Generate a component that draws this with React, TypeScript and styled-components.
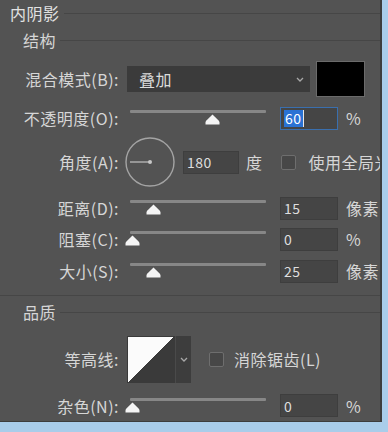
import styled, { createGlobalStyle } from "styled-components";

const GlobalStyle = createGlobalStyle`
  html, body {
    margin: 0;
    padding: 0;
    background: #a9cdea;
  }
  body {
    font-family: "Noto Sans CJK SC", "Noto Sans", sans-serif;
  }
`;

const Screen = styled.div`
  width: 388px;
  height: 432px;
  background: #a9cdea;
  overflow: hidden;
`;

const Panel = styled.div`
  width: 382px;
  height: 422px;
  box-sizing: border-box;
  background: #535353;
  border-right: 2px solid #3d3d3d;
  border-bottom: 1px solid #3d3d3d;
  overflow: hidden;
  color: #d6d6d6;
  font-size: 16px;
  letter-spacing: 0.5px;
  display: flex;
  flex-direction: column;
`;

const Legend = styled.div<{ $indent: number; $height: number; $bright?: boolean }>`
  display: flex;
  align-items: center;
  flex-shrink: 0;
  height: ${(p) => p.$height}px;
  padding-left: ${(p) => p.$indent}px;
  color: ${(p) => (p.$bright ? "#e2e2e2" : "#d6d6d6")};
  white-space: nowrap;

  &::after {
    content: "";
    flex: 1;
    margin-left: 4px;
    border-top: 1px solid #464646;
  }
`;

const Divider = styled.div`
  flex-shrink: 0;
  margin-top: 7px;
  border-top: 1px solid #464646;
`;

const Row = styled.div<{ $height: number }>`
  display: flex;
  align-items: center;
  flex-shrink: 0;
  height: ${(p) => p.$height}px;
  white-space: nowrap;
`;

const Label = styled.span`
  width: 119px;
  flex-shrink: 0;
  text-align: right;
`;

const Dropdown = styled.div`
  width: 183px;
  height: 26px;
  margin-left: 8px;
  box-sizing: border-box;
  padding: 0 6px 0 12px;
  background: #3b3b3b;
  display: flex;
  align-items: center;
  justify-content: space-between;
  color: #dcdcdc;
`;

const Swatch = styled.div`
  width: 49px;
  height: 36px;
  margin-left: 6px;
  box-sizing: border-box;
  background: #000;
  border: 1px solid #6b6b6b;
`;

const Slider = styled.div`
  position: relative;
  width: 136px;
  height: 22px;
  margin-left: 11px;
  padding-top: 3px;
  box-sizing: border-box;
  flex-shrink: 0;
`;

const Track = styled.div`
  height: 3px;
  border-radius: 1px;
  background: #878787;
`;

const Thumb = styled.svg`
  position: absolute;
  top: 7px;
  width: 15px;
  height: 11px;
  margin-left: -7.5px;
`;

const NumberBox = styled.div<{ $width?: number; $focused?: boolean; $gap?: number }>`
  width: ${(p) => p.$width ?? 58}px;
  height: 23px;
  margin-left: ${(p) => p.$gap ?? 14}px;
  box-sizing: border-box;
  padding-left: 3px;
  background: #454545;
  border: 1px solid ${(p) => (p.$focused ? "#3a6fae" : "#3e3e3e")};
  display: flex;
  align-items: center;
  font-size: 14px;
  color: #dedede;
  flex-shrink: 0;
`;

const Selected = styled.span`
  display: inline-block;
  height: 17px;
  line-height: 17px;
  padding: 0 1px;
  background: #2a72d4;
  color: #fff;
`;

const Caret = styled.span`
  display: inline-block;
  width: 1px;
  height: 17px;
  background: #e8e8e8;
`;

const Unit = styled.span<{ $gap?: number }>`
  margin-left: ${(p) => p.$gap ?? 8}px;
`;

const Dial = styled.svg`
  width: 50px;
  height: 50px;
  margin-left: 6px;
  flex-shrink: 0;
`;

const CheckBox = styled.div<{ $gap: number }>`
  width: 15px;
  height: 15px;
  margin-left: ${(p) => p.$gap}px;
  box-sizing: border-box;
  border: 1px solid #6e6e6e;
  border-radius: 2px;
  background: #474747;
  flex-shrink: 0;
`;

const CheckText = styled.span<{ $gap: number }>`
  margin-left: ${(p) => p.$gap}px;
`;

const ContourPicker = styled.div`
  display: flex;
  margin-left: 8px;
  height: 47px;
  flex-shrink: 0;
`;

const ContourPreview = styled.div`
  width: 48px;
  height: 47px;
  box-sizing: border-box;
  border: 1px solid #3a3a3a;
  background: linear-gradient(to bottom right, #fbfbfb 50%, #3a3a3a 50%);
`;

const ContourArrow = styled.div`
  width: 15px;
  background: #3d3d3d;
  border-left: 1px solid #4a4a4a;
  display: flex;
  align-items: center;
  justify-content: center;
`;

function Chevron() {
  return (
    <svg width="8" height="5" viewBox="0 0 8 5">
      <path d="M1 1 L4 4 L7 1" fill="none" stroke="#a8a8a8" strokeWidth="1.3" />
    </svg>
  );
}

function SliderBar({ at }: { at: number }) {
  return (
    <Slider>
      <Track />
      <Thumb viewBox="0 0 15 11" style={{ left: `${at * 100}%` }}>
        <path
          d="M7.5 0.5 L13.6 6.6 Q14.5 7.5 14.5 8.6 L14.5 10.5 L0.5 10.5 L0.5 8.6 Q0.5 7.5 1.4 6.6 Z"
          fill="#f4f4f4"
        />
      </Thumb>
    </Slider>
  );
}

type SliderRowProps = {
  label: string;
  at: number;
  value: string;
  unit: string;
  height: number;
};

function SliderRow({ label, at, value, unit, height }: SliderRowProps) {
  return (
    <Row $height={height}>
      <Label>{label}</Label>
      <SliderBar at={at} />
      <NumberBox>{value}</NumberBox>
      <Unit>{unit}</Unit>
    </Row>
  );
}

export default function App() {
  return (
    <Screen>
      <GlobalStyle />
      <Panel>
        <Legend $indent={10} $height={26} $bright>
          内阴影
        </Legend>
        <Legend $indent={23} $height={28}>
          结构
        </Legend>

        <Row $height={50}>
          <Label>混合模式(B):</Label>
          <Dropdown>
            <span>叠加</span>
            <Chevron />
          </Dropdown>
          <Swatch />
        </Row>

        <Row $height={28}>
          <Label>不透明度(O):</Label>
          <SliderBar at={0.61} />
          <NumberBox $focused>
            <Selected>60</Selected>
            <Caret />
          </NumberBox>
          <Unit>%</Unit>
        </Row>

        <Row $height={60}>
          <Label>角度(A):</Label>
          <Dial viewBox="0 0 50 50">
            <circle cx="25" cy="25" r="24" fill="none" stroke="#a4a4a4" strokeWidth="1.4" />
            <line x1="5" y1="25" x2="25" y2="25" stroke="#b4b4b4" strokeWidth="1.4" />
            <circle cx="25" cy="25" r="2" fill="#c8c8c8" />
          </Dial>
          <NumberBox $width={56} $gap={8}>
            180
          </NumberBox>
          <Unit $gap={7}>度</Unit>
          <CheckBox $gap={18} />
          <CheckText $gap={13}>使用全局光</CheckText>
        </Row>

        <SliderRow label="距离(D):" at={0.17} value="15" unit="像素" height={32} />
        <SliderRow label="阻塞(C):" at={0.015} value="0" unit="%" height={30} />
        <SliderRow label="大小(S):" at={0.17} value="25" unit="像素" height={34} />

        <Divider />
        <Legend $indent={23} $height={32}>
          品质
        </Legend>

        <Row $height={62}>
          <Label>等高线:</Label>
          <ContourPicker>
            <ContourPreview />
            <ContourArrow>
              <Chevron />
            </ContourArrow>
          </ContourPicker>
          <CheckBox $gap={18} />
          <CheckText $gap={10}>消除锯齿(L)</CheckText>
        </Row>

        <SliderRow label="杂色(N):" at={0.015} value="0" unit="%" height={31} />
      </Panel>
    </Screen>
  );
}
